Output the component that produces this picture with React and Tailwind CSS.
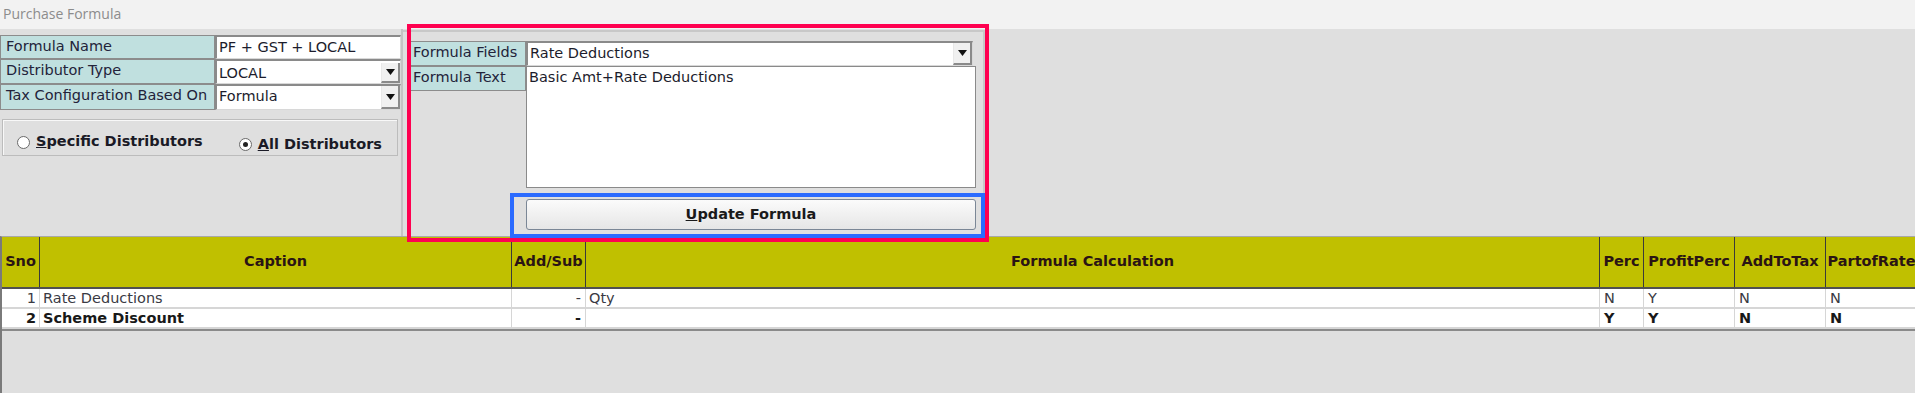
import React from "react";

const COLS = "grid-cols-[38px_472px_74px_1014px_44px_91px_91px_91px]";

const rows = [
  { sno: 1, caption: "Rate Deductions", addSub: "-", formula: "Qty", perc: "N", profit: "Y", addTax: "N", partRate: "N", bold: false },
  { sno: 2, caption: "Scheme Discount", addSub: "-", formula: "", perc: "Y", profit: "Y", addTax: "N", partRate: "N", bold: true },
];

const headers = ["Sno", "Caption", "Add/Sub", "Formula Calculation", "Perc", "ProfitPerc", "AddToTax", "PartofRate"];

// teal caption cell used by both forms
const Label = ({ children, className = "" }) => (
  <div className={`bg-[#c0e0df] border border-[#8c8c8c] pl-[5px] pt-[1px] text-[14.5px] leading-[19px] text-[#23233a] whitespace-nowrap overflow-hidden ${className}`}>
    {children}
  </div>
);

const DropArrow = () => (
  <div className="w-[19px] h-full bg-[#f0f0f0] border-l border-l-[#e8e8e8] border-b-2 border-b-[#8a8a8a] border-r-2 border-r-[#8a8a8a] flex items-center justify-center">
    <svg width="9" height="6" viewBox="0 0 9 6"><path d="M0 0h9L4.5 6z" fill="#111" /></svg>
  </div>
);

const TextBox = ({ value, drop, className = "" }) => (
  <div className={`flex bg-white border-t-2 border-l-2 border-t-[#8a8a8a] border-l-[#8a8a8a] border-b border-r border-b-[#d8d8d8] border-r-[#d8d8d8] ${className}`}>
    <div className="flex-1 pl-[2px] text-[14.5px] leading-[20px] text-[#1c1c2c] whitespace-nowrap overflow-hidden">{value}</div>
    {drop && <DropArrow />}
  </div>
);

const Radio = ({ checked, letter, rest, className = "" }) => (
  <div className={`flex items-center gap-[6px] ${className}`}>
    <span className="w-[13px] h-[13px] rounded-full bg-white border border-[#6a6a6a] flex items-center justify-center">
      {checked && <span className="w-[5px] h-[5px] rounded-full bg-[#222]" />}
    </span>
    <span className="text-[14.5px] font-bold text-[#1a1a26]">
      <span className="underline">{letter}</span>
      {rest}
    </span>
  </div>
);

export default function App() {
  return (
    <div className="relative w-[1915px] h-[393px] overflow-hidden bg-[#dfdfdf] flex flex-col font-['DejaVu_Sans',sans-serif]">
      {/* Title bar */}
      <div className="h-[29px] shrink-0 bg-[#f2f2f2] flex items-center pl-[3px] pb-[2px] text-[14px] text-[#8c8c8c] font-['Open_Sans',sans-serif]">
        Purchase Formula
      </div>

      {/* Top section */}
      <div className="h-[207px] shrink-0 flex">
        {/* Left form */}
        <div className="w-[403px] border-r-2 border-r-[#c4c4c4] pt-[6px] flex flex-col">
          <div className="flex h-[24px]">
            <Label className="w-[215px]">Formula Name</Label>
            <TextBox value="PF + GST + LOCAL" className="w-[186px]" />
          </div>
          <div className="flex h-[25px]">
            <Label className="w-[215px]">Distributor Type</Label>
            <TextBox value="LOCAL" drop className="w-[186px] pt-[2px]" />
          </div>
          <div className="flex h-[26px]">
            <Label className="w-[215px]">Tax Configuration Based On</Label>
            <TextBox value="Formula" drop className="w-[186px]" />
          </div>
          <div className="mt-[9px] ml-[2px] mr-[3px] h-[37px] border border-[#bcbcbc] shadow-[inset_1px_1px_0_#f8f8f8] flex items-center pl-[14px] pt-[9px]">
            <Radio letter="S" rest="pecific Distributors" />
            <Radio checked letter="A" rest="ll Distributors" className="ml-[36px] mt-[5px]" />
          </div>
        </div>

        {/* Formula editor */}
        <div className="w-[582px] mt-[1px] border-t-2 border-t-[#c8c8c8] border-r-2 border-r-[#c8c8c8] pl-[4px] pt-[9px] flex flex-col">
          <div className="flex h-[25px]">
            <Label className="w-[119px]">Formula Fields</Label>
            <TextBox value="Rate Deductions" drop className="w-[447px]" />
          </div>
          <div className="flex">
            <div className="w-[119px]">
              <Label className="h-[25px]">Formula Text</Label>
            </div>
            <div className="w-[450px] h-[122px] bg-white border border-[#8a8a8a] px-[2px] text-[14.5px] leading-[20px] text-[#1c1c2c]">
              Basic Amt+Rate Deductions
            </div>
          </div>
          <div className="flex pl-[119px] mt-[11px]">
            <button className="w-[450px] h-[31px] rounded-[3px] border border-[#7b8796] bg-gradient-to-b from-[#fbfbfb] to-[#e6e6e6] text-[14.5px] font-bold text-[#1a1a1a]">
              <span className="underline">U</span>pdate Formula
            </button>
          </div>
        </div>
      </div>

      {/* Grid */}
      <div className="flex-1 flex flex-col border-l-2 border-l-[#7a7a7a] border-t border-t-[#a8a8a8]">
        <div className={`grid ${COLS} h-[52px] bg-[#c0c000] border-b-2 border-b-[#505050]`}>
          {headers.map((h, i) => (
            <div
              key={h}
              className={`flex items-center justify-center text-[14.5px] font-bold text-[#2a1414] whitespace-nowrap overflow-hidden ${i < headers.length - 1 ? "border-r border-r-[#3a3a3a]" : ""}`}
            >
              {h}
            </div>
          ))}
        </div>
        {rows.map((r) => (
          <div
            key={r.sno}
            className={`grid ${COLS} h-[20px] bg-white border-b-2 border-b-[#d6d6d6] text-[14.5px] leading-[19px] ${r.bold ? "font-bold text-[#181818]" : "text-[#3a3a44]"}`}
          >
            <div className="text-right pr-[3px] border-r border-r-[#d6d6d6]">{r.sno}</div>
            <div className="pl-[3px] border-r border-r-[#d6d6d6] whitespace-nowrap">{r.caption}</div>
            <div className="text-right pr-[4px] border-r border-r-[#d6d6d6]">{r.addSub}</div>
            <div className="pl-[3px] border-r border-r-[#d6d6d6]">{r.formula}</div>
            <div className="pl-[4px] border-r border-r-[#d6d6d6]">{r.perc}</div>
            <div className="pl-[4px] border-r border-r-[#d6d6d6]">{r.profit}</div>
            <div className="pl-[4px] border-r border-r-[#d6d6d6]">{r.addTax}</div>
            <div className="pl-[4px]">{r.partRate}</div>
          </div>
        ))}
        <div className="h-[2px] bg-[#8a8a8a]" />
      </div>

      {/* Annotation frames drawn over the form */}
      <div className="absolute left-[407px] top-[24px] w-[582px] h-[218px] border-4 border-[#ff0050] pointer-events-none" />
      <div className="absolute left-[510px] top-[193px] w-[475px] h-[45px] border-4 border-[#2b6bff] pointer-events-none" />
    </div>
  );
}
